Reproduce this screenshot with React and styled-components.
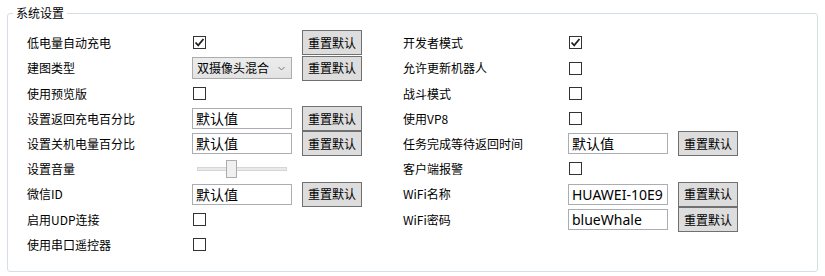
import styled, { createGlobalStyle } from "styled-components";

const GlobalStyle = createGlobalStyle`
  html, body {
    margin: 0;
    padding: 0;
    background: #ffffff;
  }
  body {
    font-family: "Noto Sans CJK SC", "Noto Sans", sans-serif;
    color: #000;
  }
`;

const Page = styled.div`
  width: 825px;
  height: 276px;
  padding: 13px 7px 0 7px;
  box-sizing: border-box;
`;

const GroupBox = styled.section`
  position: relative;
  width: 811px;
  height: 259px;
  box-sizing: border-box;
  border: 1px solid #d5dfe5;
  border-radius: 3px;
  padding: 16px 0 0 19px;
  display: flex;
  column-gap: 41px;
`;

const Legend = styled.span`
  position: absolute;
  top: -9px;
  left: 5px;
  padding: 0 3px;
  background: #fff;
  font-size: 12px;
  line-height: 16px;
`;

const Column = styled.div`
  display: flex;
  flex-direction: column;
`;

const Row = styled.div`
  display: grid;
  grid-template-columns: 165px 110px 60px;
  height: ${(p) => (p.tall ? "26px" : "25px")};
  align-items: center;
`;

const Label = styled.span`
  font-size: 12px;
  line-height: 16px;
  white-space: nowrap;
`;

const Check = styled.span`
  width: 13px;
  height: 13px;
  margin-left: 1px;
  box-sizing: border-box;
  border: 1px solid #333;
  background: #fff;
  display: flex;
  align-items: center;
  justify-content: center;
`;

const Input = styled.div`
  width: 100px;
  height: 21px;
  box-sizing: border-box;
  border: 1px solid #abadb3;
  padding-left: 3px;
  font-family: "Noto Sans", "Noto Sans CJK SC", sans-serif;
  font-size: 14px;
  line-height: 19px;
  white-space: nowrap;
  overflow: hidden;
`;

const Combo = styled.div`
  width: 100px;
  height: 22px;
  box-sizing: border-box;
  border: 1px solid #acacac;
  background: linear-gradient(#ececec, #e3e3e3);
  padding: 0 6px 0 4px;
  display: flex;
  align-items: center;
  justify-content: space-between;
  font-size: 12px;
  line-height: 16px;
`;

const Button = styled.button`
  width: 60px;
  height: 25px;
  box-sizing: border-box;
  border: 1px solid #707070;
  background: #dddddd;
  font-family: "Noto Sans CJK SC", "Noto Sans", sans-serif;
  font-size: 12px;
  line-height: 16px;
  color: #000;
  padding: 0;
  border-radius: 0;
`;

const Slider = styled.div`
  position: relative;
  width: 100px;
  height: 18px;
  display: flex;
  align-items: center;
`;

const Track = styled.div`
  margin-left: 5px;
  width: 90px;
  height: 4px;
  box-sizing: border-box;
  border: 1px solid #d6d6d6;
  background: #e7eaea;
`;

const Thumb = styled.div`
  position: absolute;
  left: 34px;
  top: 0;
  width: 11px;
  height: 18px;
  box-sizing: border-box;
  border: 1px solid #acacac;
  background: #f0f0f0;
`;

const Tick = () => (
  <svg width="11" height="11" viewBox="0 0 11 11">
    <path d="M1.5 5.5 L4.2 8.3 L9.5 2" fill="none" stroke="#222" strokeWidth="1.8" />
  </svg>
);

const Chevron = () => (
  <svg width="7" height="5" viewBox="0 0 7 5">
    <path d="M0.5 1 L3.5 4 L6.5 1" fill="none" stroke="#777" strokeWidth="1" />
  </svg>
);

const Reset = () => <Button>重置默认</Button>;

function App() {
  return (
    <Page>
      <GlobalStyle />
      <GroupBox>
        <Legend>系统设置</Legend>
        <Column>
          <Row>
            <Label>低电量自动充电</Label>
            <Check><Tick /></Check>
            <Reset />
          </Row>
          <Row tall>
            <Label>建图类型</Label>
            <Combo>
              <span>双摄像头混合</span>
              <Chevron />
            </Combo>
            <Reset />
          </Row>
          <Row>
            <Label>使用预览版</Label>
            <Check />
          </Row>
          <Row>
            <Label>设置返回充电百分比</Label>
            <Input>默认值</Input>
            <Reset />
          </Row>
          <Row>
            <Label>设置关机电量百分比</Label>
            <Input>默认值</Input>
            <Reset />
          </Row>
          <Row>
            <Label>设置音量</Label>
            <Slider>
              <Track />
              <Thumb />
            </Slider>
          </Row>
          <Row tall>
            <Label>微信ID</Label>
            <Input>默认值</Input>
            <Reset />
          </Row>
          <Row>
            <Label>启用UDP连接</Label>
            <Check />
          </Row>
          <Row>
            <Label>使用串口遥控器</Label>
            <Check />
          </Row>
        </Column>
        <Column>
          <Row>
            <Label>开发者模式</Label>
            <Check><Tick /></Check>
          </Row>
          <Row tall>
            <Label>允许更新机器人</Label>
            <Check />
          </Row>
          <Row>
            <Label>战斗模式</Label>
            <Check />
          </Row>
          <Row>
            <Label>使用VP8</Label>
            <Check />
          </Row>
          <Row>
            <Label>任务完成等待返回时间</Label>
            <Input>默认值</Input>
            <Reset />
          </Row>
          <Row>
            <Label>客户端报警</Label>
            <Check />
          </Row>
          <Row tall>
            <Label>WiFi名称</Label>
            <Input>HUAWEI-10E9</Input>
            <Reset />
          </Row>
          <Row>
            <Label>WiFi密码</Label>
            <Input>blueWhale</Input>
            <Reset />
          </Row>
        </Column>
      </GroupBox>
    </Page>
  );
}

export default App;
